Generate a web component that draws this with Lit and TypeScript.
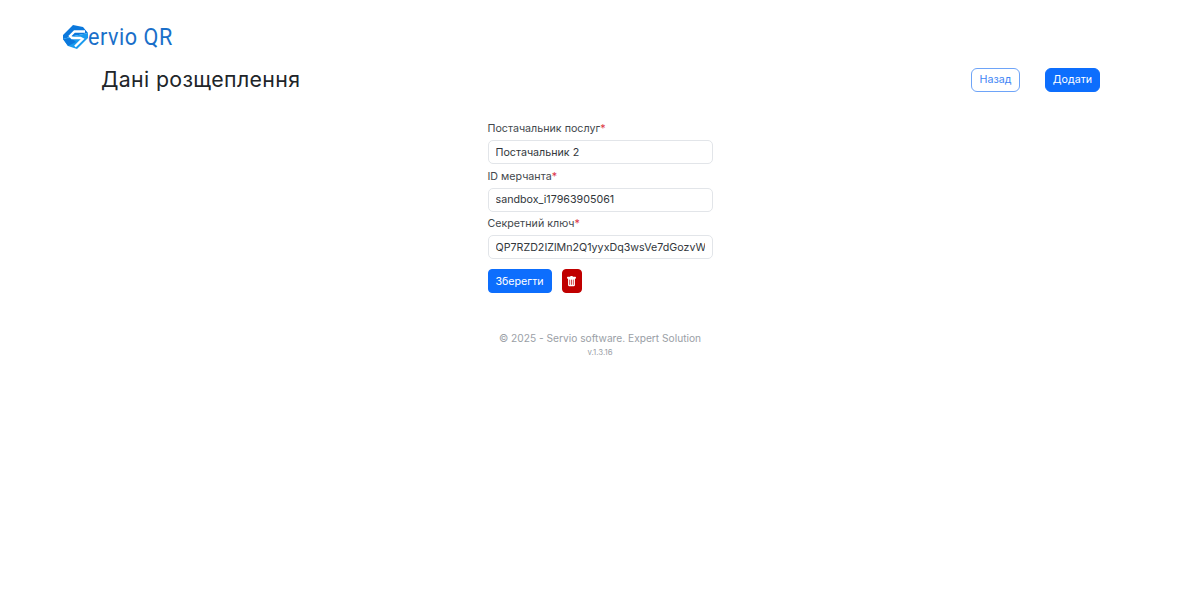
import { css, html, LitElement } from "lit";
import { customElement } from "lit/decorators.js";

const fields = [
  { label: "Постачальник послуг", value: "Постачальник 2" },
  { label: "ID мерчанта", value: "sandbox_i17963905061" },
  { label: "Секретний ключ", value: "QP7RZD2IZlMn2Q1yyxDq3wsVe7dGozvWkT4hLs" },
];

@customElement("app-root")
export class AppRoot extends LitElement {
  static styles = css`
    * {
      box-sizing: border-box;
    }

    :host {
      display: block;
      height: 590px;
      background: #fff;
      color: #212529;
      font-family: Inter, "Open Sans", sans-serif;
      font-size: 10.7px;
    }

    .brand {
      display: flex;
      align-items: center;
      height: 62px;
      padding: 13px 0 0 62px;
    }

    .brand svg {
      display: block;
      flex: none;
      width: 26px;
      height: 25px;
    }

    .brand-name {
      color: #1a6fc9;
      font-family: Roboto, sans-serif;
      font-size: 24px;
      font-weight: 400;
      letter-spacing: 0.6px;
      line-height: 25px;
      transform: scaleX(0.9);
      transform-origin: left center;
    }

    .head {
      display: flex;
      align-items: center;
      width: 1000px;
      height: 35px;
      margin: 0 auto;
      padding-left: 1px;
    }

    h1 {
      flex: 1;
      margin: 0 0 2px;
      color: #212529;
      font-size: 21.3px;
      font-weight: 400;
      letter-spacing: 0.35px;
    }

    .btn {
      display: inline-flex;
      align-items: center;
      justify-content: center;
      height: 24px;
      padding: 0;
      border: 1px solid #0d6efd;
      border-radius: 6px;
      background: #0d6efd;
      color: #fff;
      font-family: inherit;
      font-size: 10.7px;
    }

    .back {
      width: 49px;
      margin-right: 25px;
      border-color: #6ea4f8;
      background: #fff;
      color: #3f86f5;
    }

    .add {
      width: 55px;
    }

    form {
      width: 225px;
      margin: 23px auto 0;
    }

    label {
      display: block;
      height: 16px;
      margin-bottom: 4px;
      color: #43484d;
      line-height: 17px;
    }

    label span {
      color: #dc3545;
    }

    input {
      display: block;
      width: 100%;
      height: 24px;
      margin-bottom: 3.5px;
      padding: 0 7px;
      border: 1px solid #e2e5e9;
      border-radius: 5px;
      background: #fff;
      color: #32373c;
      font-family: inherit;
      font-size: 10.7px;
      outline: none;
    }

    .actions {
      display: flex;
      gap: 10px;
      margin-top: 10px;
    }

    .save {
      width: 64px;
      border-radius: 4px;
    }

    .delete {
      width: 20px;
      border-color: #c00000;
      border-radius: 4px;
      background: #c00000;
    }

    .delete svg {
      display: block;
      width: 11px;
      height: 11px;
    }

    footer {
      margin-top: 37px;
      color: #9aa0a6;
      text-align: center;
    }

    .copy {
      font-size: 10.2px;
      line-height: 16px;
    }

    .version {
      margin-top: 1px;
      font-size: 7.8px;
      line-height: 11px;
    }
  `;

  render() {
    return html`
      <div class="brand">
        <svg viewBox="0 0 26 25" role="presentation">
          <path fill="#0b78dc" d="M1 10 L11 0 L21 2 L26 8 L12 11 L1 14 Z" />
          <path fill="#1a9bef" d="M26 8 V13 L15 24 L6 21 L1 14 L12 11 Z" />
          <path fill="#0b78dc" d="M6 21 L1 14 L9 13 L14 17 Z" />
          <path
            fill="none"
            stroke="#fff"
            stroke-width="2.4"
            d="M23 6.5 H12.5 L8 11 L10 13 H18.5 L20.5 14 L13 21.5"
          />
        </svg>
        <span class="brand-name">ervio QR</span>
      </div>

      <div class="head">
        <h1>Дані розщеплення</h1>
        <button class="btn back">Назад</button>
        <button class="btn add">Додати</button>
      </div>

      <form>
        ${fields.map(
          (field) => html`
            <label>${field.label}<span>*</span></label>
            <input .value=${field.value} />
          `
        )}
        <div class="actions">
          <button type="button" class="btn save">Зберегти</button>
          <button type="button" class="btn delete" aria-label="delete">
            <svg viewBox="0 0 16 16" role="presentation">
              <path
                fill="#fff"
                d="M2.5 1a1 1 0 0 0-1 1v1a1 1 0 0 0 1 1H3v9a2 2 0 0 0 2 2h6a2 2 0 0 0 2-2V4h.5a1 1 0 0 0 1-1V2a1 1 0 0 0-1-1H10a1 1 0 0 0-1-1H7a1 1 0 0 0-1 1H2.5zm3 4a.5.5 0 0 1 .5.5v7a.5.5 0 0 1-1 0v-7a.5.5 0 0 1 .5-.5zM8 5a.5.5 0 0 1 .5.5v7a.5.5 0 0 1-1 0v-7A.5.5 0 0 1 8 5zm3 .5v7a.5.5 0 0 1-1 0v-7a.5.5 0 0 1 1 0z"
              />
            </svg>
          </button>
        </div>
      </form>

      <footer>
        <div class="copy">© 2025 - Servio software. Expert Solution</div>
        <div class="version">v.1.3.16</div>
      </footer>
    `;
  }
}
